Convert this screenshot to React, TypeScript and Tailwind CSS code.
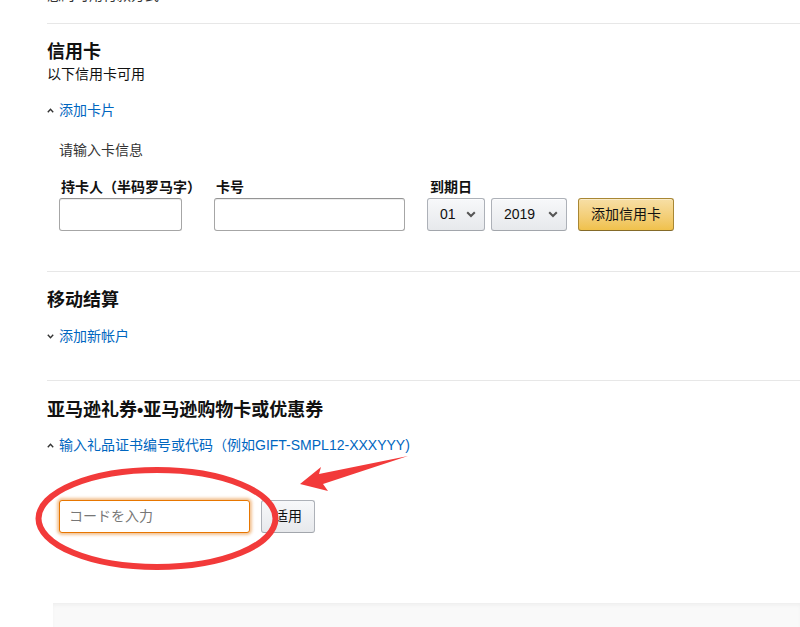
import React from 'react';

const font = "font-['Liberation_Sans','Noto_Sans_CJK_SC',sans-serif]";

function Caret({ up }: { up?: boolean }) {
  return (
    <svg width="7" height="5" viewBox="0 0 7 5" className="mr-[5px] shrink-0">
      <polyline
        points={up ? '0.8,4.2 3.5,1.3 6.2,4.2' : '0.8,0.8 3.5,3.7 6.2,0.8'}
        fill="none"
        stroke="#333"
        strokeWidth="1.4"
      />
    </svg>
  );
}

function ToggleLink({ up, children }: { up?: boolean; children: React.ReactNode }) {
  return (
    <div className="flex items-center h-[20px] text-[14px] leading-[20px] text-[#0066c0]">
      <Caret up={up} />
      <span>{children}</span>
    </div>
  );
}

function Chevron() {
  return (
    <svg width="10" height="7" viewBox="0 0 10 7">
      <polyline points="1.2,1.2 5,5 8.8,1.2" fill="none" stroke="#555" strokeWidth="2" />
    </svg>
  );
}

function Select({ value, width }: { value: string; width: string }) {
  return (
    <div
      className={`${width} h-[33px] flex items-center justify-between pl-[12px] pr-[8px] rounded-[3px] border border-[#adb1b8] border-b-[#a2a6ac] bg-gradient-to-b from-[#f7f8fa] to-[#e7e9ec] shadow-[inset_0_1px_0_rgba(255,255,255,0.6)] text-[14px] text-[#111]`}
    >
      <span>{value}</span>
      <Chevron />
    </div>
  );
}

const inputCls =
  'h-[33px] rounded-[3px] border border-[#a6a6a6] border-t-[#949494] bg-white shadow-[inset_0_1px_0_rgba(0,0,0,0.07)]';

export default function App() {
  return (
    <div className={`relative w-[800px] h-[627px] overflow-hidden bg-white text-[#111] ${font}`}>
      <div className="pl-[47px]">
        {/* previous section, scrolled off */}
        <div className="h-[23px] flex flex-col">
          <p className="-mt-[15px] text-[14px] leading-[20px] text-[#333] whitespace-nowrap">您的可用付款方式 ›</p>
        </div>

        {/* 信用卡 */}
        <section className="border-t border-[#e7e7e7] pt-[16px] pb-[40px]">
          <h2 className="text-[18px] leading-[24px] font-bold">信用卡</h2>
          <p className="text-[14px] leading-[20px] text-[#111]">以下信用卡可用</p>
          <div className="mt-[16px]">
            <ToggleLink up>添加卡片</ToggleLink>
          </div>
          <div className="pl-[12px]">
            <p className="mt-[20px] text-[14px] leading-[20px] text-[#333]">请输入卡信息</p>
            <div className="mt-[17px] flex items-end">
              <div className="w-[123px]">
                <label className="block pl-[2px] mb-[1px] text-[14px] leading-[20px] font-bold whitespace-nowrap">持卡人（半码罗马字）</label>
                <div className={`${inputCls} w-[123px]`} />
              </div>
              <div className="ml-[32px] w-[191px]">
                <label className="block pl-[2px] mb-[1px] text-[14px] leading-[20px] font-bold whitespace-nowrap">卡号</label>
                <div className={`${inputCls} w-[191px]`} />
              </div>
              <div className="ml-[22px]">
                <label className="block pl-[3px] mb-[1px] text-[14px] leading-[20px] font-bold whitespace-nowrap">到期日</label>
                <div className="flex items-center">
                  <Select value="01" width="w-[58px]" />
                  <div className="ml-[6px]">
                    <Select value="2019" width="w-[76px]" />
                  </div>
                  <button className="ml-[11px] w-[96px] h-[33px] rounded-[3px] border border-[#a88734] border-b-[#846a29] bg-gradient-to-b from-[#f7dfa5] to-[#f0c14b] shadow-[inset_0_1px_0_rgba(255,255,255,0.4)] text-[14px] text-[#111]">
                    添加信用卡
                  </button>
                </div>
              </div>
            </div>
          </div>
        </section>

        {/* 移动结算 */}
        <section className="border-t border-[#e7e7e7] pt-[16px] pb-[34px]">
          <h2 className="text-[18px] leading-[24px] font-bold">移动结算</h2>
          <div className="mt-[14px]">
            <ToggleLink>添加新帐户</ToggleLink>
          </div>
        </section>

        {/* 礼券 */}
        <section className="border-t border-[#e7e7e7] pt-[17px] h-[223px]">
          <h2 className="text-[18px] leading-[24px] font-bold">亚马逊礼券•亚马逊购物卡或优惠券</h2>
          <div className="mt-[13px]">
            <ToggleLink up>输入礼品证书编号或代码（例如GIFT-SMPL12-XXXYYY)</ToggleLink>
          </div>
          <div className="mt-[45px] pl-[12px] flex items-center">
            <div className="w-[191px] h-[33px] flex items-center px-[9px] rounded-[3px] border border-[#e77600] bg-white shadow-[0_0_3px_2px_rgba(228,121,17,0.45)] text-[14px] text-[#777]">
              コードを入力
            </div>
            <button className="ml-[11px] w-[54px] h-[33px] rounded-[3px] border border-[#adb1b8] border-b-[#a2a6ac] bg-gradient-to-b from-[#f7f8fa] to-[#e7e9ec] text-[14px] text-[#111]">
              适用
            </button>
          </div>
        </section>
      </div>

      {/* footer strip */}
      <div className="ml-[53px] h-[25px] bg-[#f9f9f9] border-t border-[#f0f0f0] shadow-[inset_0_2px_3px_rgba(0,0,0,0.03)]" />

      {/* annotation overlay */}
      <svg className="absolute inset-0 pointer-events-none" width="800" height="627" viewBox="0 0 800 627">
        <ellipse cx="157" cy="518.5" rx="118.5" ry="48.5" fill="none" stroke="#f23a3a" strokeWidth="6" />
        <polygon points="300,484 321,467 319,474 408,456 323,484 328,491" fill="#f23a3a" />
      </svg>
    </div>
  );
}
